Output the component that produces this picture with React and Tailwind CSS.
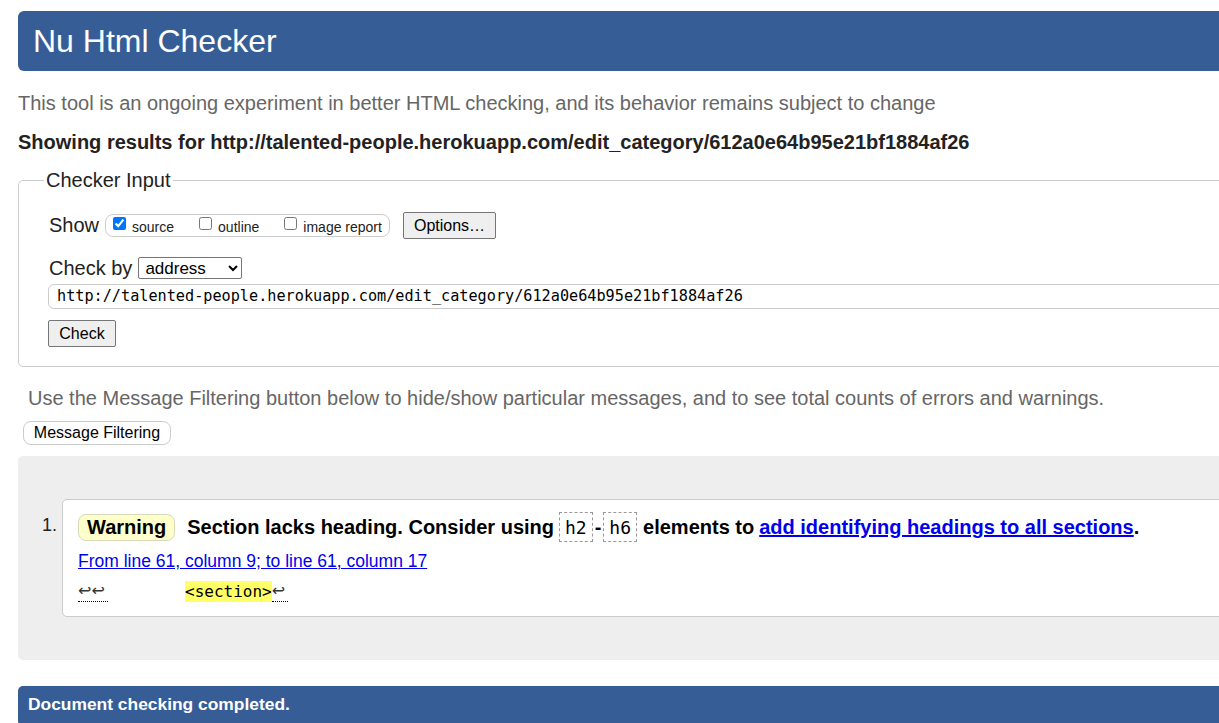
import React from "react";

const sans = { fontFamily: '"Liberation Sans", Arial, sans-serif' };
const mono = { fontFamily: '"DejaVu Sans Mono", "Liberation Mono", monospace' };

export default function App() {
  return (
    <div className="w-[1219px] h-[723px] overflow-hidden bg-white text-[#222]" style={sans}>
      <div className="w-[1300px] pl-[18px] pt-[11px]">
        {/* Header */}
        <div className="h-[60px] bg-[#365d95] rounded-l-[6px] flex items-center pl-[15px]">
          <h1 className="text-[32px] leading-none text-white font-normal">Nu Html Checker</h1>
        </div>

        <p className="mt-[21px] text-[20px] leading-[23px] text-[#666]">
          This tool is an ongoing experiment in better HTML checking, and its behavior remains subject to change
        </p>
        <p className="mt-[16px] text-[20px] leading-[23px] font-bold text-[#222]">
          Showing results for http://talented-people.herokuapp.com/edit_category/612a0e64b95e21bf1884af26
        </p>

        {/* Checker Input */}
        <fieldset className="mt-[15px] border border-[#ccc] rounded-l-[5px] pl-[25px] pb-[19px]">
          <legend className="px-[2px] text-[20px] leading-[23px] text-[#222]">Checker Input</legend>
          <div className="pl-[5px]">
            <div className="mt-[20px] flex items-center h-[27px]">
              <span className="text-[20px] leading-[23px]">Show</span>
              <div className="ml-[6px] h-[23px] w-[285px] border border-[#ccc] rounded-[8px] flex items-center pl-[7px] text-[14px] text-[#222]">
                <label className="flex items-center">
                  <input type="checkbox" defaultChecked className="w-[13px] h-[13px] m-0 mr-[6px] -mt-[5px]" />
                  <span className="leading-[16px] mt-[2px]">source</span>
                </label>
                <label className="flex items-center ml-[25px]">
                  <input type="checkbox" className="w-[13px] h-[13px] m-0 mr-[6px] -mt-[5px]" />
                  <span className="leading-[16px] mt-[2px]">outline</span>
                </label>
                <label className="flex items-center ml-[25px]">
                  <input type="checkbox" className="w-[13px] h-[13px] m-0 mr-[6px] -mt-[5px]" />
                  <span className="leading-[16px] mt-[2px]">image report</span>
                </label>
              </div>
              <button className="ml-[13px] h-[27px] w-[93px] bg-[#efefef] border border-[#767676] rounded-[2px] text-[16px] text-black leading-none">
                Options…
              </button>
            </div>

            <div className="mt-[18px] flex items-center h-[22px]">
              <span className="text-[20px] leading-[23px]">Check by</span>
              <select className="ml-[6px] w-[104px] h-[22px] border border-[#767676] rounded-[2px] text-[17px] text-black pl-[2px] bg-white" defaultValue="address">
                <option value="address">address</option>
                <option value="file">file upload</option>
                <option value="text">text input</option>
              </select>
            </div>

            <div
              className="mt-[5px] -ml-[1px] h-[25px] border border-[#ccc] rounded-l-[6px] flex items-center pl-[8px] text-[15.2px] text-black"
              style={mono}
            >
              http://talented-people.herokuapp.com/edit_category/612a0e64b95e21bf1884af26
            </div>

            <button className="mt-[11px] -ml-[1px] h-[27px] w-[68px] bg-[#efefef] border border-[#767676] rounded-[2px] text-[16px] text-black leading-none block">
              Check
            </button>
          </div>
        </fieldset>

        <p className="mt-[20px] ml-[10px] text-[20px] leading-[23px] text-[#666]">
          Use the Message Filtering button below to hide/show particular messages, and to see total counts of errors and warnings.
        </p>
        <button className="mt-[11px] ml-[5px] h-[24px] w-[148px] bg-white border border-[#ccc] rounded-[8px] text-[16px] text-black leading-none block">
          Message Filtering
        </button>

        {/* Results */}
        <div className="mt-[11px] bg-[#eee] rounded-l-[5px] pt-[43px] pb-[43px]">
          <div className="flex">
            <div className="w-[44px] pr-[5px] text-right text-[18px] leading-[21px] pt-[16px] text-[#222]">1.</div>
            <div className="flex-1 bg-white border border-[#ccc] rounded-l-[5px] pl-[15px] pt-[12px] h-[118px]">
              <div className="flex items-center text-[20px] font-bold text-black">
                <span className="h-[27px] px-[8px] flex items-center bg-[#ffffcc] border border-[#d8d8b8] rounded-[8px] leading-none">
                  Warning
                </span>
                <span className="ml-[12px]">Section lacks heading. Consider using</span>
                <code className="ml-[5px] h-[30px] px-[5px] flex items-center border border-dashed border-[#999] font-normal text-[18px]" style={mono}>
                  h2
                </code>
                <span className="mx-[2px]">-</span>
                <code className="h-[30px] px-[5px] flex items-center border border-dashed border-[#999] font-normal text-[18px]" style={mono}>
                  h6
                </code>
                <span className="ml-[6px]">elements to</span>
                <a href="#" className="ml-[5px] text-[#0000ee] underline">add identifying headings to all sections</a>
                <span>.</span>
              </div>
              <a href="#" className="block mt-[9px] text-[17.5px] leading-[21px] text-[#0000ee] underline w-max">
                From line 61, column 9; to line 61, column 17
              </a>
              <div className="mt-[9px] flex items-center text-[16px] leading-[21px] text-black" style={mono}>
                <span
                  className="w-[30px] border-b border-dotted border-black text-[16px] leading-[20px] text-[#333]"
                  style={{ fontFamily: '"DejaVu Sans", sans-serif' }}
                >
                  ↩↩
                </span>
                <span className="w-[77px]"></span>
                <span className="bg-[#ffff66]">&lt;section&gt;</span>
                <span
                  className="w-[16px] border-b border-dotted border-black text-[16px] leading-[20px] text-[#333]"
                  style={{ fontFamily: '"DejaVu Sans", sans-serif' }}
                >
                  ↩
                </span>
              </div>
            </div>
          </div>
        </div>

        <div className="mt-[26px] h-[40px] bg-[#365d95] rounded-l-[5px] pl-[10px] pt-[7px]">
          <span className="text-[17.4px] font-bold text-white leading-[21px]">Document checking completed.</span>
        </div>
      </div>
    </div>
  );
}
